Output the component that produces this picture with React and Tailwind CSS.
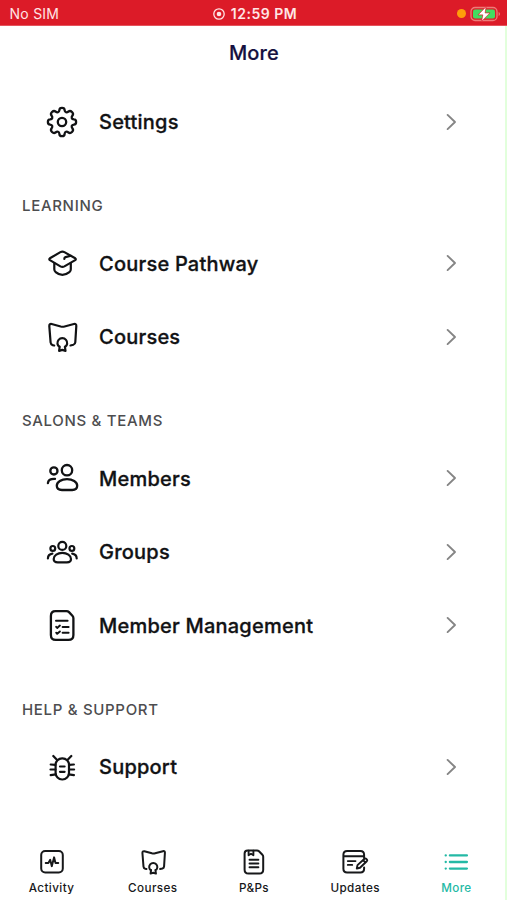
import clsx from 'clsx'

const stroke = {
  fill: 'none',
  stroke: 'currentColor',
  strokeLinecap: 'round',
  strokeLinejoin: 'round',
}

function GearIcon() {
  return (
    <svg className="w-9 h-9" viewBox="0 0 36 36" strokeWidth={2.3} {...stroke}>
      <circle cx="18" cy="18" r="4.2" />
      <path d="M15.4 6.1Q15.4 3.9 18 3.9T20.6 6.1C20.9 8.5 22.6 8.9 24.5 7.5Q26.2 6.2 28 8T28.5 11.5C27.1 13.4 27.5 15.1 29.9 15.4Q32.1 15.4 32.1 18T29.9 20.6C27.5 20.9 27.1 22.6 28.5 24.5Q29.8 26.2 28 28T24.5 28.5C22.6 27.1 20.9 27.5 20.6 29.9Q20.6 32.1 18 32.1T15.4 29.9C15.1 27.5 13.4 27.1 11.5 28.5Q9.8 29.8 8 28T7.5 24.5C8.9 22.6 8.5 20.9 6.1 20.6Q3.9 20.6 3.9 18T6.1 15.4C8.5 15.1 8.9 13.4 7.5 11.5Q6.2 9.8 8 8T11.5 7.5C13.4 8.9 15.1 8.5 15.4 6.1Z" />
    </svg>
  )
}

function CapIcon() {
  return (
    <svg className="w-9 h-9" viewBox="0 0 36 36" strokeWidth={2.2} {...stroke}>
      <path d="M5.9 13.3 16.4 7.1Q18.4 6 20.4 7.1L31.2 13.3Q32.4 14.2 31.2 15.1L20.4 21.4Q18.4 22.5 16.4 21.4L5.9 15.1Q4.7 14.2 5.9 13.3Z" />
      <path d="M10.3 18.2V24.2Q10.3 26 11.7 27.1Q14.7 29.8 18.4 29.8T25.4 27.1Q26.8 26 26.8 24.2V18.2M27 10.8 21.5 12.1Q20.3 12.5 20.3 14" />
    </svg>
  )
}

function CourseIcon({ className = 'w-9 h-9', width = 2.2 }) {
  return (
    <svg className={className} viewBox="0 0 36 36" strokeWidth={width} {...stroke}>
      <path d="M10.2 26.5 8.7 26.1Q6.8 25.5 6.6 23.5L5.3 7.2Q5.2 4.7 7.6 5L16.7 7.5Q18.7 8 20.6 7.5L29.9 5Q32.4 4.5 32.3 7L31.3 23.3Q31.2 25.2 29.3 25.8L26.5 26.5" />
      <path d="M15.7 28.2A4.9 4.9 0 1 1 20.9 28.2M15.7 27.6 15.1 31.9 18.3 30.9 21.5 31.9 20.9 27.6" />
    </svg>
  )
}

function MembersIcon() {
  return (
    <svg className="w-9 h-9" viewBox="0 0 36 36" strokeWidth={2.3} {...stroke}>
      <circle cx="23" cy="10.2" r="5.2" />
      <circle cx="9.9" cy="10.9" r="3.6" />
      <path d="M3.9 23.2C4.1 20.3 6.7 18.7 11 18.9M23 19.2C17.5 19.2 12.8 21.7 12.8 25.8C12.8 28.8 15 30 18 30H28.2C31.2 30 33.2 28.7 33.2 25.8C33.2 21.7 28.5 19.2 23 19.2Z" />
    </svg>
  )
}

function GroupsIcon() {
  return (
    <svg className="w-9 h-9" viewBox="0 0 36 36" strokeWidth={2.2} {...stroke}>
      <circle cx="18.3" cy="11.9" r="4" />
      <circle cx="8.8" cy="14.4" r="2.4" />
      <circle cx="27.9" cy="14.4" r="2.4" />
      <path d="M18.3 18.9C13.6 18.9 9.7 21.4 9.7 25.1C9.7 27.4 11.3 28.4 13.8 28.4H22.9C25.4 28.4 27 27.4 27 25.1C27 21.4 23 18.9 18.3 18.9ZM3.9 24.5C4 21.6 5.4 20.1 8.4 19.7M32.7 24.5C32.6 21.6 31.2 20.1 28.2 19.7" />
    </svg>
  )
}

function ChecklistIcon() {
  return (
    <svg className="w-9 h-9" viewBox="0 0 36 36" strokeWidth={2.3} {...stroke}>
      <path d="M11.5 4.1H22.5Q24 4.1 25 5.1L28.4 8.7Q29.4 9.8 29.4 11.3V27.9Q29.4 32.9 24.4 32.9H11.8Q6.9 32.9 6.9 27.9V8.9Q6.9 4.1 11.5 4.1Z" />
      <path d="M12 13.7H23.6M18.6 19.9H24.6M18.6 25.8H24.6M12.2 19.8 13.2 20.9 15.9 18.6M12.2 25.7 13.2 26.8 15.9 24.5" strokeWidth={2} />
    </svg>
  )
}

function BugIcon() {
  return (
    <svg className="w-9 h-9" viewBox="0 0 36 36" strokeWidth={2.2} {...stroke}>
      <rect x="11.6" y="9.3" width="13.4" height="21.2" rx="6.5" />
      <path d="M9.3 7 12.9 10.8M27.3 7 23.7 10.8M6.7 15.5 11.4 15.9M6.5 20.5H11.4M6.7 26.2 11.8 25.4M29.9 15.5 25.2 15.9M30.1 20.5H25.2M29.9 26.2 24.8 25.4M16 17.5H20.6M16 22.8H20.6" />
    </svg>
  )
}

function ActivityIcon() {
  return (
    <svg className="w-7 h-7" viewBox="0 0 28 28" strokeWidth={2} {...stroke}>
      <rect x="3.2" y="3.1" width="21.6" height="21.4" rx="4" />
      <path d="M7.7 15H10.4L12.2 11.8 13.8 18.2 16.1 9.3 17.5 15H20.3" strokeWidth={1.9} />
    </svg>
  )
}

function PoliciesIcon() {
  return (
    <svg className="w-7 h-7" viewBox="0 0 28 28" strokeWidth={2} {...stroke}>
      <path d="M7.6 2.4H17Q18.2 2.4 19 3.2L22.4 6.8Q23.2 7.6 23.2 8.8V21.8Q23.2 25.6 19.4 25.6H8.4Q4.6 25.6 4.6 21.8V5.4Q4.6 2.4 7.6 2.4Z" />
      <path d="M8.6 2.7V7.2L11 5.7 13.4 7.2V2.7M9.5 11.8H18.4M9.5 15.5H18.4M9.5 19.2H18.4" strokeWidth={1.9} />
    </svg>
  )
}

function UpdatesIcon() {
  return (
    <svg className="w-7 h-7" viewBox="0 0 28 28" strokeWidth={2} {...stroke}>
      <path d="M23.1 10V6.8Q23.1 3.1 19.4 3.1H6.1Q2.4 3.1 2.4 6.8V20.8Q2.4 24.5 6.1 24.5H19.4Q23.1 24.5 23.1 20.8V19.5M2.7 8.2H22.8" />
      <path d="M6.8 13.1H14.5M6.8 16.9H11.2M15.8 20.5 16.5 17.1 23.5 10.7Q24.5 10 25.6 11.1T25.8 13.2L19 19.8ZM22.2 12.1 24.3 14.4" strokeWidth={1.9} />
    </svg>
  )
}

function MoreIcon() {
  return (
    <svg className="w-7 h-7" viewBox="0 0 28 28" strokeWidth={2.3} {...stroke}>
      <path d="M7.9 7.4H24.9M7.9 14H24.9M7.9 20.6H24.9M3.7 7.4H3.8M3.7 14H3.8M3.7 20.6H3.8" />
    </svg>
  )
}

const sections = [
  {
    title: 'LEARNING',
    items: [
      { label: 'Course Pathway', icon: CapIcon },
      { label: 'Courses', icon: CourseIcon },
    ],
  },
  {
    title: 'SALONS & TEAMS',
    items: [
      { label: 'Members', icon: MembersIcon },
      { label: 'Groups', icon: GroupsIcon },
      { label: 'Member Management', icon: ChecklistIcon },
    ],
  },
  {
    title: 'HELP & SUPPORT',
    items: [{ label: 'Support', icon: BugIcon }],
  },
]

const tabs = [
  { label: 'Activity', icon: ActivityIcon },
  { label: 'Courses', icon: () => <CourseIcon className="w-[30px] h-[30px]" width={2.4} /> },
  { label: 'P&Ps', icon: PoliciesIcon },
  { label: 'Updates', icon: UpdatesIcon },
  { label: 'More', icon: MoreIcon, active: true },
]

function StatusBar() {
  return (
    <div className="grid grid-cols-3 items-center h-[26px] pt-0.5 bg-[#dc1b28] border-b border-[#e5535c] text-[#ffe5e5] shrink-0">
      <span className="pl-[9.5px] text-[14px] tracking-[0.25px]">No SIM</span>
      <span className="flex items-center justify-center gap-1.5 pl-[3px] text-[14px] font-semibold tracking-[0.5px] whitespace-nowrap">
        <svg className="w-3 h-3" viewBox="0 0 12 12">
          <circle cx="6" cy="6" r="5.2" fill="none" stroke="currentColor" strokeWidth="1.3" />
          <circle cx="6" cy="6" r="2.3" fill="currentColor" />
        </svg>
        12:59 PM
      </span>
      <span className="flex items-center justify-end gap-1 pr-1.5">
        <span className="w-[9px] h-[9px] rounded-full bg-[#ff9d0a]" />
        <svg className="w-[31px] h-4" viewBox="0 0 31 16">
          <rect x="1" y="1.5" width="26" height="13" rx="4" fill="none" stroke="#ee7b79" strokeWidth="1.3" />
          <rect x="3" y="3.5" width="22" height="9" rx="2" fill="#43dc60" />
          <path d="M28.6 6V10Q30 9.4 30 8T28.6 6Z" fill="#ee7b79" />
          <path d="M16.2 0.6 8 8.9H12.8L11.5 15.4 20 6.9H15.1Z" fill="#fff" stroke="#dc1b28" strokeWidth="0.7" />
        </svg>
      </span>
    </div>
  )
}

function MenuRow({ label, icon: Icon }) {
  return (
    <button className="flex items-center w-full h-[73.7px] pl-11 pr-12 text-left text-[#111214]">
      <Icon />
      <span className="ml-[19px] pt-px flex-1 text-[20px] font-medium tracking-[0.22px] [-webkit-text-stroke:0.3px]">
        {label}
      </span>
      <svg className="w-3 h-5" viewBox="0 0 12 20" strokeWidth={1.9} {...stroke} stroke="#858585">
        <path d="M2.6 2.9 10 10 2.6 17.1" />
      </svg>
    </button>
  )
}

export default function App() {
  return (
    <div className="flex flex-col w-full h-[900px] overflow-hidden bg-white font-[Inter,sans-serif]">
      <StatusBar />
      <div className="flex flex-col flex-1 border-r-2 border-[#e2ffdc]">
        <header className="flex justify-center h-[59px] pt-[13px] pl-[3px] text-[20px] leading-7 font-medium tracking-[0.15px] text-[#15103f] [-webkit-text-stroke:0.2px] shrink-0">
          <h1>More</h1>
        </header>

        <main className="flex-1">
          <MenuRow label="Settings" icon={GearIcon} />
          {sections.map((section) => (
            <section key={section.title}>
              <h2 className="h-[67.6px] pt-[37.5px] pl-[22px] text-[15px] leading-[20px] font-medium tracking-[0.68px] text-[#4d4d4f]">
                {section.title}
              </h2>
              {section.items.map((item) => (
                <MenuRow key={item.label} label={item.label} icon={item.icon} />
              ))}
            </section>
          ))}
        </main>

        <nav className="grid grid-cols-5 h-[56px] pl-px -mr-0.5 shrink-0">
          {tabs.map(({ label, icon: Icon, active }) => (
            <button
              key={label}
              className={clsx('flex flex-col items-center', active ? 'text-[#24b9a5]' : 'text-[#17181a]')}
            >
              <span className="flex items-center justify-center h-9">
                <Icon />
              </span>
              <span className="text-[11.7px] leading-4 font-medium tracking-[0.4px]">{label}</span>
            </button>
          ))}
        </nav>
      </div>
    </div>
  )
}
